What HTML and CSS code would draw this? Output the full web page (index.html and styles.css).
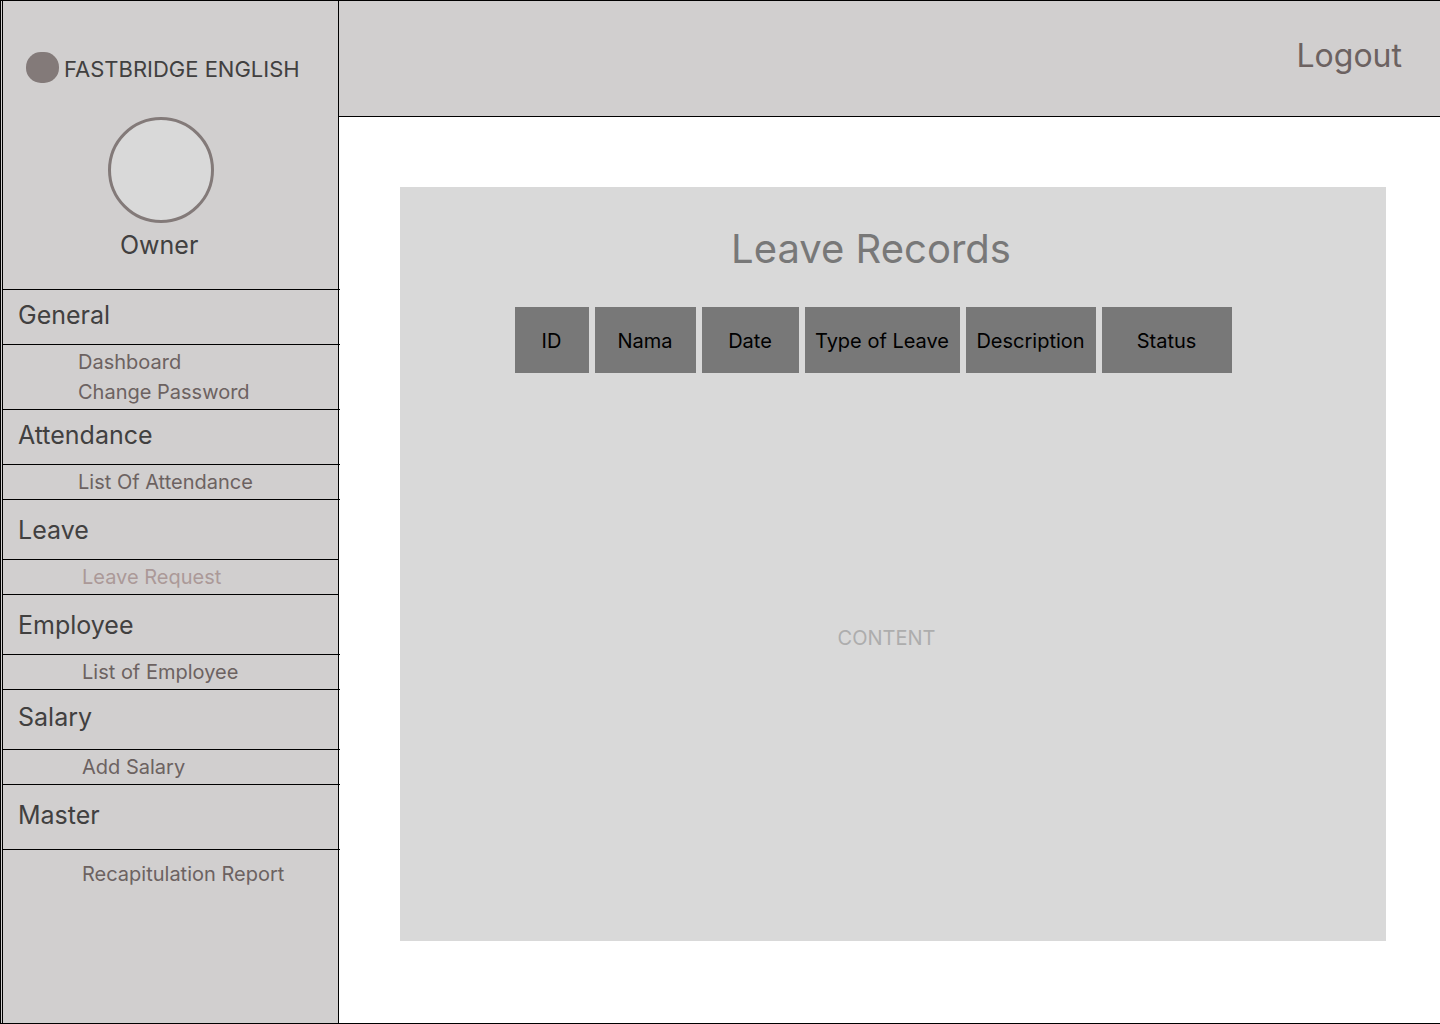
FILE: index.html
```html
<!DOCTYPE html>
<html lang="en">
<head>
<meta charset="utf-8">
<meta name="viewport" content="width=device-width, initial-scale=1">
<title>Leave Records</title>
<link rel="stylesheet" href="styles.css">
</head>
<body>
<div class="app">
  <aside class="sidebar">
    <div class="profile">
      <div class="brand">
        <svg class="brand-mark" viewBox="0 0 33 31" aria-hidden="true"><rect width="33" height="31" rx="15"/></svg>
        <span>FASTBRIDGE ENGLISH</span>
      </div>
      <div class="avatar"></div>
      <p class="role">Owner</p>
    </div>
    <nav class="menu">
      <h2 class="group compact">General</h2>
      <ul class="links">
        <li><a href="#">Dashboard</a></li>
        <li><a href="#">Change Password</a></li>
      </ul>
      <h2 class="group compact">Attendance</h2>
      <ul class="links">
        <li><a href="#">List Of Attendance</a></li>
      </ul>
      <h2 class="group inset">Leave</h2>
      <ul class="links nested inset">
        <li><a href="#" class="current" aria-current="page">Leave Request</a></li>
      </ul>
      <h2 class="group">Employee</h2>
      <ul class="links nested">
        <li><a href="#">List of Employee</a></li>
      </ul>
      <h2 class="group raised">Salary</h2>
      <ul class="links nested">
        <li><a href="#">Add Salary</a></li>
      </ul>
      <h2 class="group tall">Master</h2>
      <ul class="links nested last">
        <li><a href="#">Recapitulation Report</a></li>
      </ul>
    </nav>
  </aside>
  <div class="page">
    <header class="topbar">
      <a class="logout" href="#">Logout</a>
    </header>
    <main class="panel">
      <h1 class="title">Leave Records</h1>
      <table class="records">
        <thead>
          <tr>
            <th scope="col" class="col-id">ID</th>
            <th scope="col" class="col-name">Nama</th>
            <th scope="col" class="col-date">Date</th>
            <th scope="col" class="col-type">Type of Leave</th>
            <th scope="col" class="col-wide">Description</th>
            <th scope="col" class="col-wide">Status</th>
          </tr>
        </thead>
      </table>
      <p class="placeholder">CONTENT</p>
    </main>
  </div>
</div>
</body>
</html>
```

FILE: styles.css
```css
* {
  box-sizing: border-box;
}

body {
  margin: 0;
  font-family: Inter, "Liberation Sans", sans-serif;
  font-size: 20px;
  line-height: 30px;
  color: #000;
  background: #fff;
}

h1, h2, p, ul {
  margin: 0;
  padding: 0;
  font-weight: 400;
}

ul {
  list-style: none;
}

a {
  color: inherit;
  text-decoration: none;
}

.app {
  display: grid;
  grid-template-columns: 339px 1fr;
  min-height: 100vh;
  border-top: 1px solid #000;
  border-bottom: 1px solid #000;
}

.sidebar {
  background: #d1cfcf;
  border-left: 3px double #000;
  border-right: 1px solid #000;
}

.profile {
  height: 289px;
  margin-right: -2px;
  padding-top: 51px;
  border-bottom: 1px solid #000;
  color: #414040;
}

.brand {
  display: flex;
  gap: 5px;
  padding-left: 23px;
  font-size: 22px;
  line-height: 34px;
  white-space: nowrap;
}

.brand-mark {
  width: 33px;
  height: 31px;
  fill: #837a79;
}

.avatar {
  width: 106px;
  height: 106px;
  margin: 31px 0 0 105px;
  border: 3px solid #837a79;
  border-radius: 50%;
  background: #d9d9d9;
}

.role {
  margin-top: 7px;
  padding-left: 117px;
  font-size: 25px;
}

.group {
  height: 60px;
  margin-right: -2px;
  padding: 15px 0 0 15px;
  border-bottom: 1px solid #000;
  font-size: 25px;
  color: #414040;
}

.group.compact {
  height: 55px;
  padding-top: 10px;
}

.group.raised {
  padding-top: 12px;
}

.group.tall {
  height: 65px;
}

.links {
  margin-right: -2px;
  padding: 2px 0 2px 75px;
  border-bottom: 1px solid #000;
  color: #6c6261;
}

.links.nested {
  padding-left: 79px;
}

.group.inset,
.links.inset {
  margin-right: 0;
}

.links.last {
  padding-top: 9px;
  border-bottom: 0;
}

.current {
  color: #ab9998;
}

.page {
  display: flex;
  flex-direction: column;
}

.topbar {
  height: 116px;
  padding: 35px 38px 0 0;
  border-bottom: 1px solid #000;
  background: #d1cfcf;
  text-align: right;
}

.logout {
  font-size: 32px;
  line-height: 40px;
  color: #6c6261;
}

.panel {
  flex: 1;
  margin: 70px 54px 82px 61px;
  padding-right: 40px;
  background: #d9d9d9;
}

.title {
  padding: 37px 4px 0 0;
  font-size: 40px;
  line-height: 50px;
  text-align: center;
  color: #787878;
}

.records {
  margin: 27px auto 0;
  border-spacing: 6px;
}

.records th {
  height: 66px;
  padding: 2px 0 0;
  background: #787878;
  font-weight: 400;
}

.col-id {
  width: 74px;
}

.col-name {
  width: 101px;
}

.col-date {
  width: 97px;
}

.col-type {
  width: 155px;
}

.col-wide {
  width: 130px;
}

.placeholder {
  padding: 244px 0 0 27px;
  text-align: center;
  color: #adadad;
}
```
